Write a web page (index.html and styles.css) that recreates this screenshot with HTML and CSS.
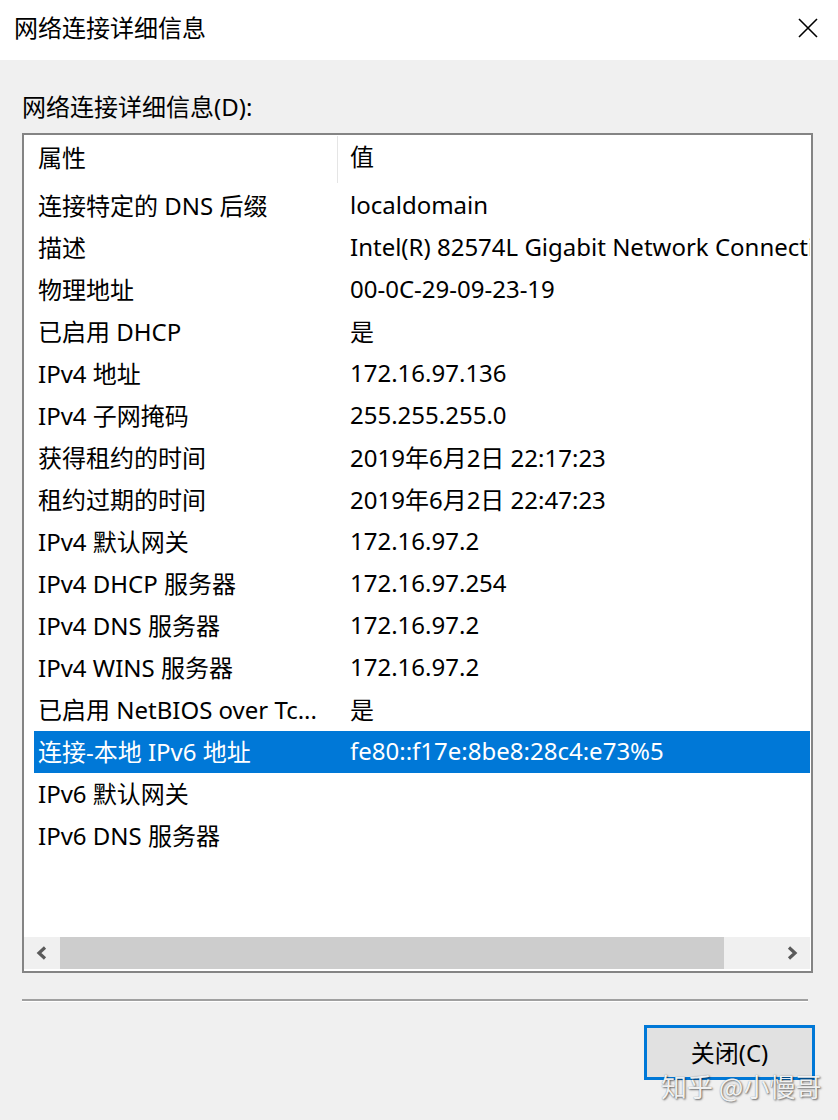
FILE: index.html
```html
<!DOCTYPE html>
<html lang="zh-CN">
<head>
<meta charset="utf-8">
<title>网络连接详细信息</title>
<link rel="stylesheet" href="styles.css">
</head>
<body>
<div class="window">
  <div class="titlebar">
    <span class="title">网络连接详细信息</span>
    <svg class="close" width="20" height="20" viewBox="0 0 20 20"><path d="M1 1 L19 19 M19 1 L1 19" stroke="#000" stroke-width="1.6" fill="none"/></svg>
  </div>
  <div class="content">
    <div class="label">网络连接详细信息(D):</div>
    <div class="listbox">
      <div class="list">
        <div class="header"><div class="c1">属性</div><div class="c2">值</div></div>
        <div class="row"><div class="c1">连接特定的 DNS 后缀</div><div class="c2">localdomain</div></div>
        <div class="row"><div class="c1">描述</div><div class="c2">Intel(R) 82574L Gigabit Network Connection</div></div>
        <div class="row"><div class="c1">物理地址</div><div class="c2">00-0C-29-09-23-19</div></div>
        <div class="row"><div class="c1">已启用 DHCP</div><div class="c2">是</div></div>
        <div class="row"><div class="c1">IPv4 地址</div><div class="c2">172.16.97.136</div></div>
        <div class="row"><div class="c1">IPv4 子网掩码</div><div class="c2">255.255.255.0</div></div>
        <div class="row"><div class="c1">获得租约的时间</div><div class="c2">2019年6月2日 22:17:23</div></div>
        <div class="row"><div class="c1">租约过期的时间</div><div class="c2">2019年6月2日 22:47:23</div></div>
        <div class="row"><div class="c1">IPv4 默认网关</div><div class="c2">172.16.97.2</div></div>
        <div class="row"><div class="c1">IPv4 DHCP 服务器</div><div class="c2">172.16.97.254</div></div>
        <div class="row"><div class="c1">IPv4 DNS 服务器</div><div class="c2">172.16.97.2</div></div>
        <div class="row"><div class="c1">IPv4 WINS 服务器</div><div class="c2">172.16.97.2</div></div>
        <div class="row"><div class="c1">已启用 NetBIOS over Tc...</div><div class="c2">是</div></div>
        <div class="row selected"><div class="c1">连接-本地 IPv6 地址</div><div class="c2">fe80::f17e:8be8:28c4:e73%5</div></div>
        <div class="row"><div class="c1">IPv6 默认网关</div><div class="c2"></div></div>
        <div class="row"><div class="c1">IPv6 DNS 服务器</div><div class="c2"></div></div>
      </div>
      <div class="hscroll">
        <div class="arrow"><svg width="12" height="14" viewBox="0 0 12 14"><polyline points="9,1.5 3,7 9,12.5" fill="none" stroke="#5a5a5a" stroke-width="3.2"/></svg></div>
        <div class="track"><div class="thumb"></div></div>
        <div class="arrow"><svg width="12" height="14" viewBox="0 0 12 14"><polyline points="3,1.5 9,7 3,12.5" fill="none" stroke="#5a5a5a" stroke-width="3.2"/></svg></div>
      </div>
    </div>
    <div class="sep"></div>
    <div class="footer">
      <button class="btn">关闭(C)</button>
    </div>
  </div>
  <div class="watermark">知乎 @小慢哥</div>
</div>
</body>
</html>
```

FILE: styles.css
```css
html, body {
  margin: 0;
  padding: 0;
}
body {
  background: #f0f0f0;
  font-family: "Noto Sans", "Noto Sans CJK SC", sans-serif;
  font-size: 24px;
  color: #000;
}
.window {
  position: relative;
  width: 838px;
  height: 1120px;
  overflow: hidden;
  background: #f0f0f0;
}
.titlebar {
  height: 60px;
  background: #fff;
  display: flex;
  align-items: center;
  justify-content: space-between;
  padding: 0 20px 0 14px;
  box-sizing: border-box;
}
.title {
  font-size: 24px;
  line-height: 30px;
  margin-top: -4px;
}
.close {
  display: block;
  margin-top: -4px;
}
.content {
  padding: 32px 0 0 22px;
}
.label {
  line-height: 30px;
  height: 30px;
  margin-bottom: 11px;
}
.listbox {
  width: 791px;
  height: 840px;
  box-sizing: border-box;
  border: 2px solid #848484;
  background: #fff;
  display: flex;
  flex-direction: column;
}
.list {
  flex: 1;
  overflow: hidden;
  white-space: nowrap;
}
.header, .row {
  display: flex;
  margin-left: 10px;
  margin-right: 1px;
}
.header {
  height: 50px;
  align-items: flex-start;
}
.header .c1 {
  border-right: 1px solid #e5e5e5;
  height: 47px;
  margin-top: 1px;
}
.header .c1, .header .c2 {
  line-height: 44px;
}
.row {
  height: 42px;
  align-items: center;
  box-sizing: border-box;
  padding-bottom: 4px;
}
.c1 {
  width: 304px;
  flex: none;
  box-sizing: border-box;
  padding-left: 4px;
  overflow: hidden;
}
.c2 {
  padding-left: 12px;
  overflow: hidden;
  flex: 1;
}
.row.selected {
  background: #0078d7;
  color: #fff;
}
.hscroll {
  height: 32px;
  margin: 0 1px 2px 0;
  background: #f0f0f0;
  display: flex;
  align-items: stretch;
}
.arrow {
  width: 36px;
  flex: none;
  display: flex;
  align-items: center;
  justify-content: center;
}
.arrow svg {
  display: block;
}
.track {
  flex: 1;
  display: flex;
}
.thumb {
  width: 664px;
  background: #cdcdcd;
}
.sep {
  width: 786px;
  height: 2px;
  background: #a0a0a0;
  border-bottom: 1px solid #fff;
  margin-top: 26px;
}
.footer {
  display: flex;
  justify-content: flex-end;
  padding-right: 23px;
  margin-top: 23px;
}
.btn {
  width: 171px;
  height: 55px;
  box-sizing: border-box;
  border: 3px solid #0078d7;
  background: #e1e1e1;
  font-family: "Noto Sans", "Noto Sans CJK SC", sans-serif;
  font-size: 24px;
  color: #000;
  padding: 0 0 2px 0;
  margin: 0;
}
.watermark {
  position: absolute;
  left: 661px;
  top: 1068px;
  font-family: "Noto Sans CJK SC", sans-serif;
  font-size: 26px;
  line-height: 36px;
  color: rgba(255, 255, 255, 0.92);
  text-shadow: 1px 1px 2px rgba(0, 0, 0, 0.55), 0 0 1px rgba(0, 0, 0, 0.4);
  white-space: nowrap;
}
```
